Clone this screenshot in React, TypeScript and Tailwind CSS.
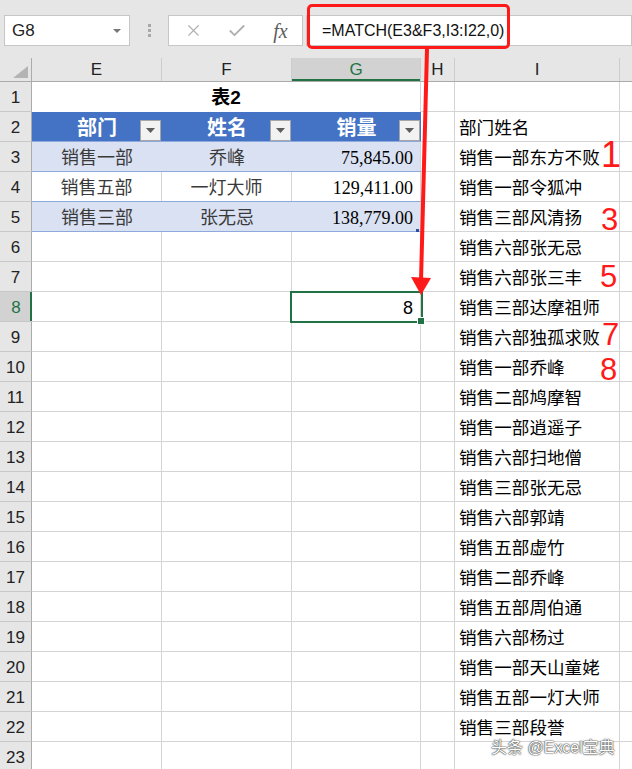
import React from 'react';
import { X, Check } from 'lucide-react';

const listI: Record<number, string> = {
  2: '部门姓名',
  3: '销售一部东方不败',
  4: '销售一部令狐冲',
  5: '销售三部风清扬',
  6: '销售六部张无忌',
  7: '销售六部张三丰',
  8: '销售三部达摩祖师',
  9: '销售六部独孤求败',
  10: '销售一部乔峰',
  11: '销售二部鸠摩智',
  12: '销售一部逍遥子',
  13: '销售六部扫地僧',
  14: '销售三部张无忌',
  15: '销售六部郭靖',
  16: '销售五部虚竹',
  17: '销售二部乔峰',
  18: '销售五部周伯通',
  19: '销售六部杨过',
  20: '销售一部天山童姥',
  21: '销售五部一灯大师',
  22: '销售三部段誉',
};

const tableRows: Record<number, { dept: string; name: string; sales: string }> = {
  3: { dept: '销售一部', name: '乔峰', sales: '75,845.00' },
  4: { dept: '销售五部', name: '一灯大师', sales: '129,411.00' },
  5: { dept: '销售三部', name: '张无忌', sales: '138,779.00' },
};

const rows = Array.from({ length: 23 }, (_, i) => i + 1);

function FilterButton() {
  return (
    <div className="absolute right-[1px] top-[8px] w-[21px] h-[21px] bg-[#f2f2f2] border border-[#a6a6a6] flex items-center justify-center">
      <svg width="9" height="5" viewBox="0 0 9 5">
        <polygon points="0,0 9,0 4.5,5" fill="#5c5c5c" />
      </svg>
    </div>
  );
}

function RowHeader({ n }: { n: number }) {
  const active = n === 8;
  return (
    <div
      className={
        active
          ? 'w-[32px] shrink-0 h-full bg-[#d2d2d2] text-[#217346] border-b border-[#c8c8c8] shadow-[inset_-2px_0_0_#217346] flex items-center justify-center pt-[3px] text-[17px]'
          : 'w-[32px] shrink-0 h-full bg-[#e6e6e6] text-[#222] border-b border-r border-b-[#c8c8c8] border-r-[#ababab] flex items-center justify-center pt-[3px] text-[17px]'
      }
    >
      {n}
    </div>
  );
}

function TablePart({ n }: { n: number }) {
  if (n === 1) {
    return (
      <div className="w-[389px] shrink-0 h-full border-r border-[#d4d4d4] flex items-center justify-center pt-[2px] text-[19px] font-bold text-black">
        表2
      </div>
    );
  }
  if (n === 2) {
    return (
      <div className="w-[389px] shrink-0 h-full flex bg-[#4472c4] border-b border-[#8ea9db] text-white font-bold text-[20px]">
        <div className="relative w-[130px] flex items-center justify-center pt-[2px]">
          部门
          <FilterButton />
        </div>
        <div className="relative w-[130px] flex items-center justify-center pt-[2px]">
          姓名
          <FilterButton />
        </div>
        <div className="relative w-[129px] flex items-center justify-center pt-[2px]">
          销量
          <FilterButton />
        </div>
      </div>
    );
  }
  const r = tableRows[n];
  if (r) {
    const banded = n !== 4;
    return (
      <div
        className={
          banded
            ? 'w-[389px] shrink-0 h-full flex bg-[#d9e1f2] border-b border-[#8ea9db] text-[18px] text-[#3a3a3a] relative'
            : 'w-[389px] shrink-0 h-full flex bg-white border-b border-[#8ea9db] text-[18px] text-[#3a3a3a]'
        }
      >
        <div className={banded ? 'w-[130px] flex items-center justify-center pt-[3px]' : 'w-[130px] flex items-center justify-center pt-[3px] border-r border-[#d4d4d4]'}>
          {r.dept}
        </div>
        <div className={banded ? 'w-[130px] flex items-center justify-center pt-[3px]' : 'w-[130px] flex items-center justify-center pt-[3px] border-r border-[#d4d4d4]'}>
          {r.name}
        </div>
        <div className="w-[129px] flex items-center justify-end pr-[7px] pt-[3px] border-r border-[#d4d4d4] font-['Liberation_Serif',serif] text-black">
          {r.sales}
        </div>
        {n === 5 && <div className="absolute right-[2px] bottom-[-1px] w-[3px] h-[3px] bg-[#2f4f9a]" />}
      </div>
    );
  }
  return (
    <div className="w-[389px] shrink-0 h-full flex">
      <div className="w-[130px] border-r border-b border-[#d4d4d4]" />
      <div className="w-[130px] border-r border-b border-[#d4d4d4]" />
      <div className="w-[129px] border-r border-b border-[#d4d4d4] flex items-center justify-end pr-[7px] pt-[3px] text-[18px] text-black">
        {n === 8 ? '8' : ''}
      </div>
    </div>
  );
}

function SheetRow({ n }: { n: number }) {
  return (
    <div className="flex h-[30px]">
      <RowHeader n={n} />
      <TablePart n={n} />
      <div className="w-[34px] shrink-0 border-r border-b border-[#d4d4d4]" />
      <div className="w-[165px] shrink-0 border-r border-b border-[#d4d4d4] flex items-center pl-[4px] pt-[3px] text-[17.6px] text-black whitespace-nowrap overflow-visible">
        {listI[n] ?? ''}
      </div>
      <div className="flex-1 border-b border-[#d4d4d4]" />
    </div>
  );
}

function App() {
  return (
    <div className="relative w-[632px] h-[769px] overflow-hidden bg-white font-['Liberation_Sans','Noto_Sans_CJK_SC',sans-serif]">
      {/* formula bar */}
      <div className="h-[58px] bg-[#e6e6e6] flex items-start pt-[15px] pl-[4px]">
        <div className="w-[126px] h-[31px] bg-white border border-[#c6c6c6] flex items-center justify-between pl-[7px] pr-[8px] text-[17px] text-[#222]">
          <span>G8</span>
          <svg width="8" height="4" viewBox="0 0 8 4">
            <polygon points="0,0 8,0 4,4" fill="#777" />
          </svg>
        </div>
        <div className="w-[38px] h-[31px] flex flex-col items-center justify-center gap-[2px]">
          <div className="w-[3px] h-[3px] bg-[#a8a8a8]" />
          <div className="w-[3px] h-[3px] bg-[#a8a8a8]" />
          <div className="w-[3px] h-[3px] bg-[#a8a8a8]" />
        </div>
        <div className="w-[135px] h-[31px] bg-white border border-[#c6c6c6] flex items-center">
          <div className="w-[46px] flex justify-center pl-[2px]">
            <X size={19} strokeWidth={1.4} color="#b0b0b0" />
          </div>
          <div className="w-[44px] flex justify-center">
            <Check size={20} strokeWidth={2.2} color="#b0b0b0" />
          </div>
          <div className="w-[43px] flex justify-center font-['Liberation_Serif',serif] italic text-[20px] text-[#5c5c5c]">
            fx
          </div>
        </div>
        <div className="flex-1 h-[31px] ml-[3px] bg-white border border-[#c6c6c6] flex items-center pl-[15px] text-[16px] text-[#111]">
          =MATCH(E3&amp;F3,I3:I22,0)
        </div>
      </div>

      {/* column headers */}
      <div className="flex h-[24px] bg-[#e6e6e6] border-b border-[#ababab] text-[17px] text-[#222]">
        <div className="w-[32px] shrink-0 border-r border-[#ababab] relative">
          <svg className="absolute left-[13px] top-[8px]" width="15" height="12" viewBox="0 0 15 12">
            <polygon points="15,0 15,12 0,12" fill="#b4b4b4" />
          </svg>
        </div>
        <div className="w-[130px] shrink-0 border-r border-[#cdcdcd] flex items-center justify-center">E</div>
        <div className="w-[130px] shrink-0 border-r border-[#cdcdcd] flex items-center justify-center">F</div>
        <div className="w-[129px] shrink-0 border-r border-[#cdcdcd] bg-[#d2d2d2] text-[#217346] shadow-[inset_0_-2px_0_#217346] flex items-center justify-center">G</div>
        <div className="w-[34px] shrink-0 border-r border-[#cdcdcd] flex items-center justify-center">H</div>
        <div className="w-[165px] shrink-0 border-r border-[#cdcdcd] flex items-center justify-center">I</div>
        <div className="flex-1" />
      </div>

      {/* grid */}
      <div className="flex flex-col">
        {rows.map((n) => (
          <SheetRow key={n} n={n} />
        ))}
      </div>

      {/* selected cell G8 */}
      <div className="absolute left-[290px] top-[291px] w-[133px] h-[32px] border-2 border-[#217346]" />
      <div className="absolute left-[417px] top-[317px] w-[8px] h-[8px] bg-[#217346] border border-white" />

      {/* annotations */}
      <div className="absolute left-[307px] top-[4px] w-[203px] h-[45px] border-[3px] border-[#ff1a1a] rounded-[5px]" />
      <svg className="absolute left-0 top-0 pointer-events-none" width="632" height="769" viewBox="0 0 632 769">
        <line x1="427" y1="49" x2="421" y2="281" stroke="#ff1a1a" strokeWidth="4" />
        <polygon points="411,277 431,278 421,295" fill="#ff1a1a" />
      </svg>
      <div className="absolute left-[601px] top-[137px] text-[36px] leading-none text-[#ff1a1a]">1</div>
      <div className="absolute left-[601px] top-[204px] text-[31px] leading-none text-[#ff1a1a]">3</div>
      <div className="absolute left-[600px] top-[261px] text-[31px] leading-none text-[#ff1a1a]">5</div>
      <div className="absolute left-[602px] top-[319px] text-[31px] leading-none text-[#ff1a1a]">7</div>
      <div className="absolute left-[600px] top-[354px] text-[31px] leading-none text-[#ff1a1a]">8</div>

      {/* watermark */}
      <div className="absolute left-[491px] top-[736px] text-[16px] text-white [text-shadow:0_0_1px_#000,0_0_2px_#444] whitespace-nowrap">
        头条 @Excel宝典
      </div>
    </div>
  );
}

export default App;
